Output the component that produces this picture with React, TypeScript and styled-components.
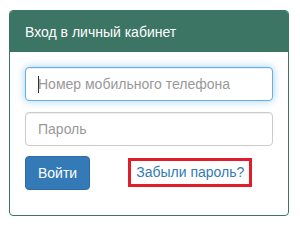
import React from "react";
import styled, { createGlobalStyle, css } from "styled-components";

const Global = createGlobalStyle`
  html, body { margin: 0; padding: 0; background: #fff; }
  body { font-family: "Liberation Sans", Arial, sans-serif; font-size: 14px; color: #333; }
  * { box-sizing: border-box; }
`;

const Page = styled.div`
  padding: 10px 0 0 9px;
`;

const Panel = styled.div`
  width: 280px;
  border: 1px solid #3c7564;
  border-radius: 4px;
  background: #fff;
  overflow: hidden;
`;

const Heading = styled.div`
  height: 41px;
  background: #3c7564;
  color: #fff;
  padding: 0 15px;
  display: flex;
  align-items: center;
  font-size: 14px;
`;

const Body = styled.div`
  padding: 15px 15px 25px;
  display: flex;
  flex-direction: column;
`;

const Field = styled.div<{ $gap: number }>`
  position: relative;
  margin-bottom: ${(p) => p.$gap}px;
`;

const Input = styled.input<{ $focused?: boolean }>`
  display: block;
  width: 248px;
  height: 34px;
  padding: 6px 12px;
  font-family: "Liberation Sans", Arial, sans-serif;
  font-size: 14px;
  color: #555;
  background: #fff;
  border: 1px solid #ccc;
  border-radius: 4px;
  outline: none;
  box-shadow: inset 0 1px 1px rgba(0, 0, 0, 0.075);
  &::placeholder { color: #999; }
  ${(p) =>
    p.$focused &&
    css`
      border-color: #66afe9;
      box-shadow: inset 0 1px 1px rgba(0, 0, 0, 0.075), 0 0 8px rgba(102, 175, 233, 0.6);
    `}
`;

const Caret = styled.span`
  position: absolute;
  left: 13px;
  top: 9px;
  width: 1px;
  height: 17px;
  background: #333;
`;

const Actions = styled.div`
  display: flex;
  align-items: center;
`;

const Button = styled.button`
  height: 34px;
  padding: 6px 12px;
  font-family: "Liberation Sans", Arial, sans-serif;
  font-size: 14px;
  color: #fff;
  background: #337ab7;
  border: 1px solid #2e6da4;
  border-radius: 4px;
`;

const ForgotLink = styled.a`
  margin-left: 38px;
  margin-top: -2px;
  height: 29px;
  display: flex;
  align-items: center;
  padding: 0 5px;
  border: 3px solid #e11d2a;
  color: #337ab7;
  text-decoration: none;
  font-size: 14px;
`;

export default function App() {
  return (
    <>
      <Global />
      <Page>
        <Panel>
          <Heading>Вход в личный кабинет</Heading>
          <Body>
            <Field $gap={11}>
              <Input $focused placeholder="Номер мобильного телефона" />
              <Caret />
            </Field>
            <Field $gap={10}>
              <Input type="password" placeholder="Пароль" />
            </Field>
            <Actions>
              <Button>Войти</Button>
              <ForgotLink href="#">Забыли пароль?</ForgotLink>
            </Actions>
          </Body>
        </Panel>
      </Page>
    </>
  );
}
